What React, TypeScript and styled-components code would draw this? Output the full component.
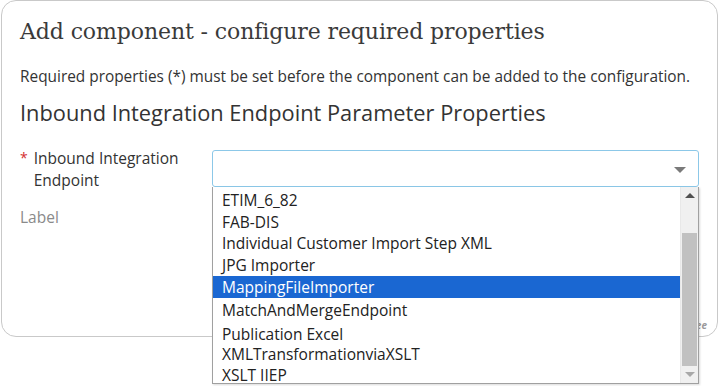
import React from "react";
import styled, { createGlobalStyle } from "styled-components";

const GlobalStyle = createGlobalStyle`
  html, body {
    margin: 0;
    padding: 0;
    background: #ffffff;
  }
  body {
    font-family: "Open Sans", "Noto Sans", sans-serif;
    color: #333333;
  }
`;

const Page = styled.div`
  width: 718px;
  height: 386px;
  overflow: hidden;
  position: relative;
`;

const Dialog = styled.div`
  box-sizing: border-box;
  width: 717px;
  height: 337px;
  margin-left: 1px;
  border: 1px solid #c9c9c9;
  border-radius: 15px;
  padding: 13px 18px 5px 18px;
  background: #ffffff;
  display: flex;
  flex-direction: column;
`;

const Title = styled.h1`
  margin: 0;
  font-family: "DejaVu Serif", "Liberation Serif", serif;
  font-weight: normal;
  font-size: 22px;
  line-height: 36px;
  color: #3a3a3a;
  letter-spacing: -0.1px;
`;

const Intro = styled.p`
  margin: 17px 0 0 0;
  font-size: 15.4px;
  line-height: 20px;
  color: #333333;
  white-space: nowrap;
`;

const SectionHeading = styled.h2`
  margin: 11px 0 0 0;
  font-weight: normal;
  font-size: 21.8px;
  line-height: 30px;
  color: #333333;
  white-space: nowrap;
`;

const FormGrid = styled.div`
  display: grid;
  grid-template-columns: 192px 487px;
  row-gap: 18px;
  margin-top: 22px;
`;

const FieldLabel = styled.div<{ $muted?: boolean }>`
  display: flex;
  gap: 6px;
  margin-top: -3px;
  font-size: 15.5px;
  line-height: 22px;
  color: ${(p) => (p.$muted ? "#8a8a8a" : "#333333")};
`;

const Required = styled.span`
  color: #d32f2f;
  font-size: 14px;
`;

const LabelText = styled.span`
  width: 150px;
`;

const SelectWrap = styled.div`
  position: relative;
`;

const SelectBox = styled.div`
  box-sizing: border-box;
  height: 37px;
  border: 1px solid #8cc8e8;
  border-radius: 3px;
  display: flex;
  align-items: center;
  justify-content: flex-end;
  padding-right: 12px;
  background: #ffffff;
`;

const Caret = styled.span`
  width: 0;
  height: 0;
  border-left: 6px solid transparent;
  border-right: 6px solid transparent;
  border-top: 6px solid #7a7a7a;
  margin-top: 2px;
`;

const ListBox = styled.div`
  position: absolute;
  left: 0;
  top: 37px;
  z-index: 2;
  box-sizing: border-box;
  width: 487px;
  height: 197px;
  border: 1px solid #a0a0a0;
  border-top: none;
  background: #ffffff;
  display: flex;
  box-shadow: 1px 1px 2px rgba(0, 0, 0, 0.15);
`;

const Options = styled.div`
  flex: 1;
  padding-top: 2px;
`;

const Option = styled.div<{ $h: number; $selected?: boolean }>`
  height: ${(p) => p.$h}px;
  display: flex;
  align-items: center;
  padding-left: 9px;
  font-size: 15.5px;
  color: ${(p) => (p.$selected ? "#ffffff" : "#222222")};
  background: ${(p) => (p.$selected ? "#1a67d2" : "transparent")};
  white-space: nowrap;
`;

const ScrollBar = styled.div`
  width: 17px;
  background: #f0f0f0;
  display: flex;
  flex-direction: column;
  align-items: center;
  border-left: 1px solid #e8e8e8;
`;

const ScrollArrow = styled.div<{ $up?: boolean }>`
  height: 24px;
  width: 17px;
  display: flex;
  align-items: center;
  justify-content: center;
  &::after {
    content: "";
    width: 0;
    height: 0;
    border-left: 5px solid transparent;
    border-right: 5px solid transparent;
    ${(p) =>
      p.$up ? "border-bottom: 5px solid #505050;" : "border-top: 5px solid #a8a8a8;"}
  }
`;

const Track = styled.div`
  flex: 1;
  width: 17px;
  display: flex;
  flex-direction: column;
`;

const Thumb = styled.div`
  margin-top: 28px;
  height: 133px;
  width: 15px;
  margin-left: 1px;
  background: #c1c1c1;
`;

const FooterHint = styled.div`
  margin-top: auto;
  margin-right: -8px;
  text-align: right;
  font-size: 10px;
  line-height: 12px;
  font-style: italic;
  font-weight: bold;
  color: #9a9a9a;
`;

const items: { text: string; h: number; selected?: boolean }[] = [
  { text: "ETIM_6_82", h: 22 },
  { text: "FAB-DIS", h: 22 },
  { text: "Individual Customer Import Step XML", h: 20 },
  { text: "JPG Importer", h: 23 },
  { text: "MappingFileImporter", h: 22, selected: true },
  { text: "MatchAndMergeEndpoint", h: 24 },
  { text: "Publication Excel", h: 23 },
  { text: "XMLTransformationviaXSLT", h: 18 },
  { text: "XSLT IIEP", h: 23 },
];

export default function App() {
  return (
    <Page>
      <GlobalStyle />
      <Dialog>
        <Title>Add component - configure required properties</Title>
        <Intro>
          Required properties (*) must be set before the component can be added to the
          configuration.
        </Intro>
        <SectionHeading>Inbound Integration Endpoint Parameter Properties</SectionHeading>
        <FormGrid>
          <FieldLabel>
            <Required>*</Required>
            <LabelText>Inbound Integration Endpoint</LabelText>
          </FieldLabel>
          <SelectWrap>
            <SelectBox>
              <Caret />
            </SelectBox>
            <ListBox>
              <Options>
                {items.map((it) => (
                  <Option key={it.text} $h={it.h} $selected={it.selected}>
                    {it.text}
                  </Option>
                ))}
              </Options>
              <ScrollBar>
                <ScrollArrow $up />
                <Track>
                  <Thumb />
                </Track>
                <ScrollArrow />
              </ScrollBar>
            </ListBox>
          </SelectWrap>
          <FieldLabel $muted>Label</FieldLabel>
        </FormGrid>
        <FooterHint>Free</FooterHint>
      </Dialog>
    </Page>
  );
}
